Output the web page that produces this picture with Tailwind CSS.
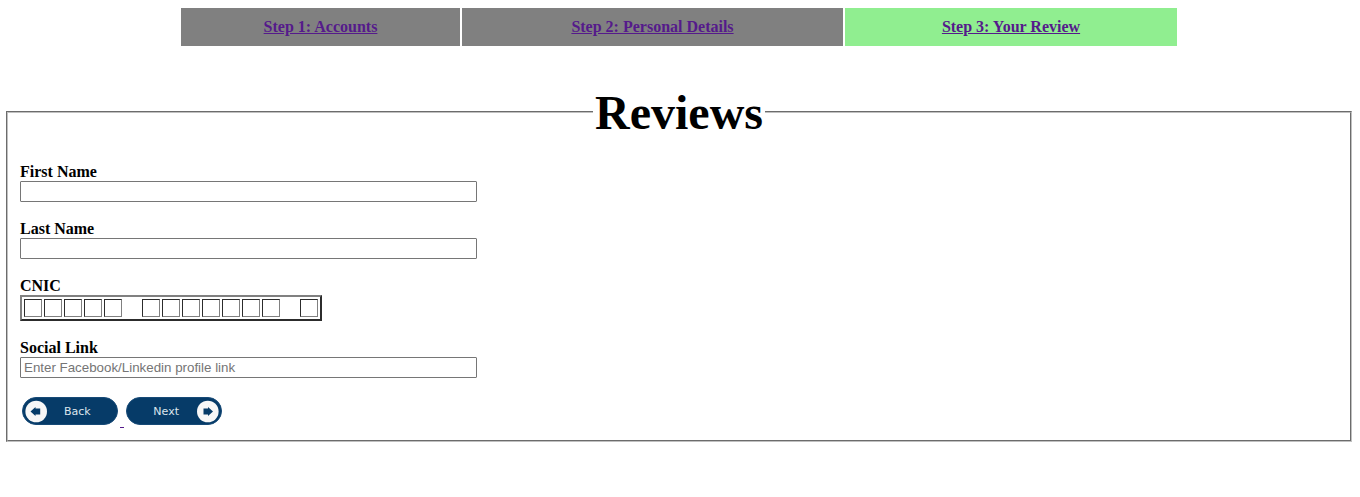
<!DOCTYPE html>
<html lang="en">
<head>
<meta charset="utf-8">
<title>Reviews</title>
<script src="https://cdn.jsdelivr.net/npm/@tailwindcss/browser@4"></script>
</head>
<body class="bg-white text-black font-['Liberation_Serif',serif] text-[16px] leading-[18px] font-bold pt-2">
<nav class="ml-[181px] flex gap-[2px] h-[38px] text-center text-[#551a8b] leading-[38px]">
  <div class="w-[279px] bg-[#808080]"><a href="#" class="underline">Step 1: Accounts</a></div>
  <div class="w-[381px] bg-[#808080]"><a href="#" class="underline">Step 2: Personal Details</a></div>
  <div class="w-[332px] bg-[#90ee90]"><a href="#" class="underline">Step 3: Your Review</a></div>
</nav>
<fieldset class="mt-[38px] ml-[6px] w-[1346px] h-[358px] border-2 [border-style:groove] border-[#c0c0c0] px-3">
  <legend class="mx-auto px-[2px] pt-[2px] text-[48px] leading-[54px]">Reviews</legend>
  <div class="pt-[23px]">
    <label class="block" for="first">First Name</label>
    <input id="first" class="block w-[457px] h-[21px] border border-[#767676] rounded-[1px] bg-white">
  </div>
  <div class="pt-[18px]">
    <label class="block" for="last">Last Name</label>
    <input id="last" class="block w-[457px] h-[21px] border border-[#767676] rounded-[1px] bg-white">
  </div>
  <div class="pt-[18px]">
    <div>CNIC</div>
    <div class="flex gap-[2px] w-[302px] h-[26px] p-[2px] border-2 border-t-[#808080] border-l-[#808080] border-b-[#2c2c2c] border-r-[#2c2c2c] [&>i]:w-[18px] [&>i]:h-[18px] [&>i]:border [&>i]:border-t-[#2c2c2c] [&>i]:border-l-[#2c2c2c] [&>i]:border-b-[#808080] [&>i]:border-r-[#808080]">
      <i></i><i></i><i></i><i></i><i></i><span class="w-4"></span><i></i><i></i><i></i><i></i><i></i><i></i><i></i><span class="w-4"></span><i></i>
    </div>
  </div>
  <div class="pt-[18px]">
    <label class="block" for="social">Social Link</label>
    <input id="social" placeholder="Enter Facebook/Linkedin profile link" class="block w-[457px] h-[21px] border border-[#767676] rounded-[1px] bg-white px-[3px] font-['Liberation_Sans',sans-serif] font-normal text-[13.333px] leading-[15px] placeholder:text-[#757575]">
  </div>
  <div class="pt-[19px] pl-[2px] flex text-white text-[11px] font-normal font-['DejaVu_Sans',sans-serif]">
    <a href="#" class="flex items-center w-24 h-7 rounded-full bg-[#063b68] border border-[#174a77] pl-[2px]">
      <svg width="23" height="23" viewBox="0 0 23 23"><circle cx="11.2" cy="11.5" r="10.8" fill="#f7f7f7"/><path d="M5.5 11.5 10.5 7v1.6h4.7v5.8h-4.7V16z" fill="#063b68"/></svg>
      <span class="ml-[16px] pt-[2px] text-[#dce5ed]">Back</span>
    </a>
    <span class="w-1 h-px bg-[#551a8b] mt-[30px] ml-[2px] mr-[2px]"></span>
    <a href="#" class="flex items-center justify-end w-24 h-7 rounded-full bg-[#063b68] border border-[#174a77] pr-[2px]">
      <span class="mr-[17px] pt-[2px] text-[#dce5ed]">Next</span>
      <svg width="23" height="23" viewBox="0 0 23 23"><circle cx="11.8" cy="11.5" r="10.8" fill="#f7f7f7"/><path d="M17 11.5 12 7v1.6H7.5v5.8H12V16z" fill="#063b68"/></svg>
    </a>
  </div>
</fieldset>
</body>
</html>
